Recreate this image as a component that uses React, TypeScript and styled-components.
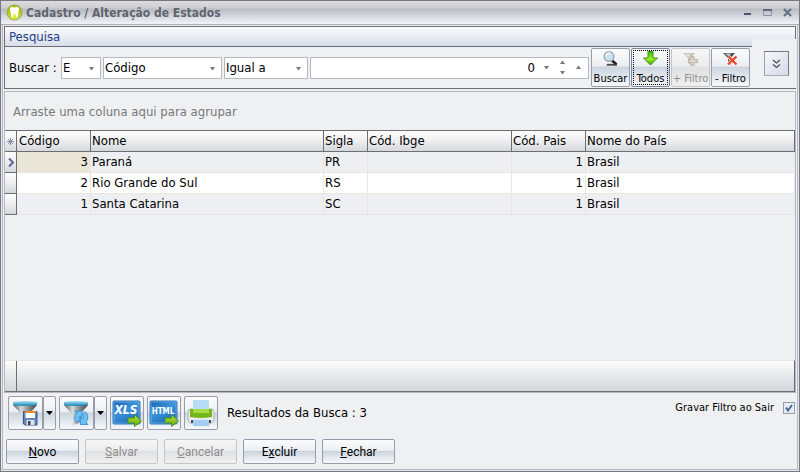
import React from "react";
import styled, { createGlobalStyle, css } from "styled-components";

const dark = "#6c6e75";
const line = "#b4b8c3";
const surface = "#eff0f2";
const cellLine = "#e8e6df";
const uiFont = '"DejaVu Sans Condensed", Tahoma, sans-serif';

const GlobalStyle = createGlobalStyle`
  *, *::before, *::after { box-sizing: border-box; }
  body { margin: 0; background: ${surface}; }
  button, input, select { font: inherit; color: inherit; margin: 0; }
`;

const Window = styled.div`
  min-height: 100vh;
  display: flex;
  flex-direction: column;
  border: 1px solid #777982;
  background: #e6e7ea;
  font: 13px/16px ${uiFont};
  color: #000;
`;

const TitleBar = styled.header`
  height: 24px;
  flex: none;
  display: flex;
  align-items: center;
  padding: 0 2px 0 5px;
  border-bottom: 1px solid #acaebb;
  background: linear-gradient(#dcdcde 0, #cfcfd2 7px, #b9bcc3 8px, #cfd2d9 14px, #eef0f5 22px);
`;

const Title = styled.h1`
  flex: 1;
  margin: 0;
  padding-left: 3px;
  font: bold 12px/16px ${uiFont};
  color: #5f646d;
`;

const WindowButton = styled.button`
  width: 20px;
  height: 20px;
  padding: 0;
  border: 0;
  background: none;
  display: flex;
  align-items: center;
  justify-content: center;
`;

const Client = styled.main`
  flex: 1;
  display: flex;
  flex-direction: column;
  margin: 0 1px 1px;
  padding: 1px;
  border: solid ${line};
  border-width: 0 1px 1px;
  background: ${surface};
`;

const SearchPanel = styled.section`
  position: relative;
  margin-bottom: 2px;
  border: 1px solid ${dark};
`;

const PanelTitle = styled.h2`
  height: 20px;
  margin: 0;
  padding: 2px 4px;
  font: 13px/16px ${uiFont};
  color: #1f3f86;
  border-bottom: 1px solid ${dark};
  background: linear-gradient(#fbfcfd, #d7dee9);
`;

const SearchRow = styled.div`
  display: flex;
  align-items: center;
  gap: 2px;
  height: 41px;
  padding: 0 45px 0 4px;
`;

const SearchLabel = styled.label`
  width: 50px;
  flex: none;
  white-space: nowrap;
`;

const Field = styled.div<{ $width?: number }>`
  height: 22px;
  display: flex;
  align-items: center;
  position: relative;
  border: 1px solid ${line};
  background: #fff;
  ${(p) => (p.$width ? css`width: ${p.$width}px; flex: none;` : css`flex: 1; min-width: 60px;`)}
`;

const Select = styled.select`
  width: 100%;
  height: 20px;
  padding: 0 18px 0 1px;
  border: 0;
  outline: 0;
  appearance: none;
  background: none;
`;

const DropMark = styled.svg`
  position: absolute;
  right: 6px;
  top: 9px;
  pointer-events: none;
`;

const NumberInput = styled.input`
  flex: 1;
  min-width: 0;
  height: 20px;
  padding: 0 3px;
  border: 0;
  outline: 0;
  background: none;
  text-align: right;
`;

const SpinButton = styled.button`
  width: 16px;
  height: 20px;
  padding: 0;
  border: 0;
  background: none;
  display: flex;
  align-items: center;
  justify-content: center;
`;

const SpinGroup = styled.div`
  display: flex;
  padding-right: 2px;
`;

const ActionBar = styled.div`
  display: flex;
  gap: 1px;
`;

const glossy = css`
  border: 1px solid #979caa;
  border-radius: 2px;
  background: linear-gradient(#fbfcfd 0%, #eceff3 45%, #ccd5df 50%, #dde3ea 70%, #f7f9fb 100%);
  color: #000;
  &:disabled {
    border-color: #c4c5c7;
    color: #8c8d8f;
    background: linear-gradient(#f6f6f7 0%, #ededee 45%, #dfe0e1 50%, #f0f0f1 100%);
  }
`;

const ActionButton = styled.button<{ $focused?: boolean }>`
  ${glossy}
  width: 39px;
  height: 39px;
  padding: 2px 0 0;
  display: flex;
  flex-direction: column;
  align-items: center;
  gap: 4px;
  font-size: 11px;
  line-height: 14px;
  white-space: nowrap;
  ${(p) => p.$focused && css`outline: 1px dotted #000; outline-offset: -3px; border-color: #7c84a0;`}
`;

const ExpandArea = styled.div`
  position: absolute;
  top: 12px;
  right: -1px;
  width: 44px;
  height: 49px;
  padding: 12px;
  background: ${surface};
`;

const ExpandButton = styled.button`
  width: 25px;
  height: 25px;
  padding: 0;
  display: flex;
  align-items: center;
  justify-content: center;
  border: 1px solid #74798a;
  border-left-color: #9a9fad;
  border-bottom-color: #a8adba;
  background: linear-gradient(135deg, #f6f7fa, #d5dae6);
`;

const GridPanel = styled.section`
  flex: 1;
  display: flex;
  flex-direction: column;
  border: 1px solid ${line};
`;

const GroupHint = styled.div`
  height: 38px;
  padding: 12px 8px;
  line-height: 16px;
  color: #77787b;
`;

const Table = styled.table`
  width: 100%;
  table-layout: fixed;
  border-collapse: separate;
  border-spacing: 0;
`;

const metal = "linear-gradient(#fdfdfd, #f0f0f2 45%, #d5d7db)";

const HeadCell = styled.th<{ $mark?: boolean }>`
  height: 22px;
  padding: 0 1px;
  border: solid ${dark};
  border-width: 1px 1px 1px 0;
  background: ${metal};
  font-weight: 400;
  text-align: left;
  white-space: nowrap;
  &:nth-child(2) { padding-left: 2px; }
`;

const Marker = styled.td`
  padding: 0 1px;
  border: solid ${dark};
  border-width: 0 1px 1px 0;
  background: ${metal};
`;

const Cell = styled.td<{ $right?: boolean; $active?: boolean }>`
  height: 21px;
  padding: 0 2px 0 1px;
  border: solid ${cellLine};
  border-width: 0 1px 1px 0;
  text-align: ${(p) => (p.$right ? "right" : "left")};
  white-space: nowrap;
  ${(p) => p.$active && css`background: #eae7d8;`}
`;

const Row = styled.tr<{ $alt: boolean }>`
  background: ${(p) => (p.$alt ? "#fff" : "#eeeff3")};
`;

const CenteredMark = styled.svg`
  display: block;
  margin: 0 auto;
`;

const GridFooter = styled.div`
  height: 32px;
  margin-top: auto;
  display: flex;
  border: solid ${dark};
  border-width: 0 1px 1px 0;
  border-top: 1px solid ${cellLine};
  background: linear-gradient(#fdfdfd, #eff0f1 30%, #d3d5da);
`;

const FooterMark = styled.div`
  width: 12px;
  border-right: 1px solid ${dark};
`;

const ToolRow = styled.div`
  display: flex;
  align-items: center;
  gap: 3px;
  padding: 3px 1px 0 4px;
`;

const Split = styled.div`
  display: flex;
`;

const ToolButton = styled.button<{ $narrow?: boolean }>`
  ${glossy}
  width: ${(p) => (p.$narrow ? 13 : 34)}px;
  height: 34px;
  padding: 0;
  display: flex;
  align-items: center;
  justify-content: center;
`;

const SplitMain = styled(ToolButton)`
  width: 35px;
`;

const ResultText = styled.output`
  flex: 1;
  padding: 0 6px;
`;

const SaveFilter = styled.label`
  display: flex;
  align-items: center;
  gap: 9px;
  font-size: 11px;
  line-height: 14px;
  padding-bottom: 10px;
`;

const CheckHolder = styled.span`
  position: relative;
  display: block;
  width: 12px;
  height: 12px;
`;

const CheckBox = styled.input`
  appearance: none;
  display: block;
  width: 12px;
  height: 12px;
  border: 1px solid #9a9ca3;
  background: #e7edf3;
  & + svg { display: none; }
  &:checked + svg { display: block; }
`;

const CheckMark = styled.svg`
  position: absolute;
  inset: 0;
  pointer-events: none;
`;

const CommandRow = styled.div`
  display: flex;
  gap: 6px;
  padding: 9px 2px 4px;
`;

const Command = styled.button`
  ${glossy}
  width: 73px;
  height: 25px;
  padding: 0;
  font: 12px/16px Roboto, "Liberation Sans", sans-serif;
`;

const Triangle = ({ up = false }: { up?: boolean }) => (
  <svg width="5" height="3" viewBox="0 0 5 3" aria-hidden="true">
    <path d={up ? "M0 3h5L3 0H2z" : "M0 0h5L3 3H2z"} fill="#77797c" />
  </svg>
);

const ToothIcon = () => (
  <svg width="17" height="17" viewBox="0 0 17 17" aria-hidden="true">
    <defs>
      <radialGradient id="tooth" cx="50%" cy="75%" r="60%">
        <stop offset="0" stopColor="#e6f04a" />
        <stop offset="1" stopColor="#a3bd10" />
      </radialGradient>
    </defs>
    <circle cx="8.500" cy="8.500" r="7.600" fill="url(#tooth)" stroke="#94a63c" strokeWidth=".8" />
    <path d="M4.300 3.800C5.300 2.200 7.200 3.300 8.500 3.400 10 3.300 11.700 2.200 12.700 3.800c.9 1.600-.2 3.400-.5 5-.2 1.900-.3 5-1.500 5-1.100 0-.8-4.200-2.200-4.200s-1.100 4.200-2.200 4.200c-1.200 0-1.300-3.100-1.500-5-.3-1.600-1.400-3.400-.5-5z" fill="#fff" />
  </svg>
);

const SearchIcon = () => (
  <svg width="17" height="17" viewBox="0 0 17 17" aria-hidden="true">
    <path d="M3 15h13l-4-2.500H6z" fill="#b9bcc0" />
    <path d="M9.500 9l5 4.500" stroke="#1f2022" strokeWidth="2.600" />
    <path d="M5 13.800h10" stroke="#3c3d40" strokeWidth="1.400" />
    <circle cx="7" cy="5.500" r="4.800" fill="#c9e2ef" stroke="#a3abb0" strokeWidth="1.400" />
    <path d="M4 5a3 3 0 0 1 4-2.500" stroke="#fff" strokeWidth="1.500" fill="none" />
  </svg>
);

const DownIcon = () => (
  <svg width="17" height="17" viewBox="0 0 17 17" aria-hidden="true">
    <defs>
      <linearGradient id="down" x2="0" y2="1">
        <stop offset="0" stopColor="#36b80e" />
        <stop offset=".55" stopColor="#a5ee20" />
        <stop offset="1" stopColor="#2aa509" />
      </linearGradient>
    </defs>
    <path d="M6 .5h5V7h4.500l-7 7-7-7H6z" fill="url(#down)" stroke="#329516" />
  </svg>
);

const PlusFilterIcon = () => (
  <svg width="17" height="17" viewBox="0 0 17 17" aria-hidden="true">
    <path d="M1 2h12L9 7v7l-3-2V7z" fill="#c8c4b7" />
    <path d="M3 3h5L7 6z" fill="#e9e6dc" />
    <path d="M9 5.500h3v3h3.500v3H12v3H9v-3H6.500v-3H9z" fill="#d8d4c7" stroke="#b9b5a8" />
  </svg>
);

const MinusFilterIcon = () => (
  <svg width="17" height="17" viewBox="0 0 17 17" aria-hidden="true">
    <path d="M1 2h12L9 7v7l-3-2V7z" fill="#4e5257" />
    <path d="M3 2.500h6L7 6z" fill="#b9c0c6" />
    <path d="M6.500 5.500l8 8M14.500 5.500l-8.500 8" stroke="#fff" strokeWidth="3.600" />
    <path d="M6.500 5.500l8 8M14.500 5.500l-8.500 8" stroke="#ee4128" strokeWidth="2.300" />
  </svg>
);

const Funnel = () => (
  <>
    <defs>
      <linearGradient id="cone">
        <stop offset="0" stopColor="#55595c" />
        <stop offset=".35" stopColor="#d7d9da" />
        <stop offset=".65" stopColor="#888c8f" />
        <stop offset="1" stopColor="#3f4346" />
      </linearGradient>
      <linearGradient id="rim" x2="0" y2="1">
        <stop offset="0" stopColor="#a7e4f7" />
        <stop offset="1" stopColor="#1581b2" />
      </linearGradient>
    </defs>
    <path d="M0 4h24l-8.500 10v8L9 24V14z" fill="url(#cone)" />
    <path d="M0 1q12-2 24 0v3q-12 2-24 0z" fill="url(#rim)" />
  </>
);

const FunnelSaveIcon = () => (
  <svg width="25" height="25" viewBox="0 0 25 25" aria-hidden="true">
    <Funnel />
    <path d="M10.500 10.500h13.500v13.500H12l-1.500-1.500z" fill="#5f88bb" stroke="#35598c" />
    <path d="M12.500 11h9.500v6h-9.500z" fill="#fff" />
    <path d="M12 10h11v2H12z" fill="#ee8b2d" />
    <path d="M13.500 19h8v5h-8z" fill="#dfe3e6" />
    <path d="M15 20h2.500v4H15z" fill="#3b4756" />
  </svg>
);

const FunnelRefreshIcon = () => (
  <svg width="25" height="25" viewBox="0 0 25 25" aria-hidden="true">
    <Funnel />
    <path
      d="M12.500 21c-2.800-3-2-7 .5-9l-2-2h7v7l-2-2c-1.500 1.500-1.200 3.500 0 5zM21 10.500c3.500 3 3.500 7.500 1 10.500l2 2.500h-7.500v-7l2 2c1.300-1.700 1.300-3.500-.2-5z"
      fill="#6cc1f4"
      stroke="#2787cb"
      strokeWidth=".8"
    />
  </svg>
);

const ExportIcon = ({ kind }: { kind: "XLS" | "HTML" }) => (
  <svg width="30" height="27" viewBox="0 0 30 27" role="img" aria-label={kind}>
    <defs>
      <linearGradient id="blue" x2=".6" y2="1">
        <stop offset="0" stopColor="#1860ae" />
        <stop offset=".5" stopColor="#3c93da" />
        <stop offset="1" stopColor="#1c6dbb" />
      </linearGradient>
      <linearGradient id="go" x2="0" y2="1">
        <stop offset="0" stopColor="#b9e63f" />
        <stop offset="1" stopColor="#63a90c" />
      </linearGradient>
    </defs>
    <rect x="1" y="1" width="27" height="23" rx="1" fill="url(#blue)" stroke="#2e78bf" />
    <rect x="2" y="2" width="25" height="21" fill="none" stroke="#84bdec" strokeWidth=".6" />
    <text
      x="14"
      y="14"
      textAnchor="middle"
      fill="#fff"
      fontFamily='"DejaVu Sans Condensed", sans-serif'
      fontWeight="bold"
      fontStyle={kind === "XLS" ? "italic" : "normal"}
      fontSize={kind === "XLS" ? 12 : 8}
    >
      {kind}
    </text>
    <path d="M16 18h6.500v-3.500L29.500 21l-7 5.500V23H16z" fill="url(#go)" stroke="#4e8f10" strokeWidth=".9" />
  </svg>
);

const PrinterIcon = () => (
  <svg width="28" height="28" viewBox="0 0 28 28" aria-hidden="true">
    <path d="M1 13q0-3 3-3h20q3 0 3 3v9l-2 2H3l-2-2z" fill="#e8e9e7" stroke="#b3b4b2" />
    <path d="M6 1h16v10H6z" fill="#b9dcf9" />
    <path d="M3 10h22v8q-11 2-22 0z" fill="#75b61d" />
    <path d="M6 10h16v4H6z" fill="#a5db47" />
    <path d="M4 19q10 1.500 20 0v2H4z" fill="#fdfdfd" />
    <path d="M4 21h20v3H4z" fill="#44474a" />
    <path d="M6 20.500h16V27H6z" fill="#a5cdf2" />
  </svg>
);

const rows = [
  { code: 3, name: "Paraná", abbr: "PR", ibge: "", countryCode: 1, country: "Brasil" },
  { code: 2, name: "Rio Grande do Sul", abbr: "RS", ibge: "", countryCode: 1, country: "Brasil" },
  { code: 1, name: "Santa Catarina", abbr: "SC", ibge: "", countryCode: 1, country: "Brasil" },
];

function Combo({ label, value, width }: { label: string; value: string; width: number }) {
  return (
    <Field $width={width}>
      <Select aria-label={label} defaultValue={value}>
        <option>{value}</option>
      </Select>
      <DropMark width="5" height="3" viewBox="0 0 5 3" aria-hidden="true">
        <path d="M0 0h5L3 3H2z" fill="#77797c" />
      </DropMark>
    </Field>
  );
}

export default function App() {
  return (
    <>
      <GlobalStyle />
      <Window>
        <TitleBar>
          <ToothIcon />
          <Title>Cadastro / Alteração de Estados</Title>
          <WindowButton aria-label="Minimizar">
            <svg width="9" height="9" viewBox="0 0 9 9"><path d="M1 5h7v2H1z" fill="#4c566b" /></svg>
          </WindowButton>
          <WindowButton aria-label="Maximizar">
            <svg width="9" height="9" viewBox="0 0 9 9">
              <path d="M.5 1.500h8v6h-8z" fill="none" stroke="#8692a4" />
              <path d="M0 1h9v2H0z" fill="#5b677b" />
            </svg>
          </WindowButton>
          <WindowButton aria-label="Fechar janela">
            <svg width="9" height="9" viewBox="0 0 9 9"><path d="M1 1l7 7M8 1L1 8" stroke="#66728a" strokeWidth="2.200" /></svg>
          </WindowButton>
        </TitleBar>
        <Client>
          <SearchPanel>
            <PanelTitle>Pesquisa</PanelTitle>
            <SearchRow>
              <SearchLabel htmlFor="value">Buscar :</SearchLabel>
              <Combo label="Operador" value="E" width={40} />
              <Combo label="Campo" value="Código" width={119} />
              <Combo label="Comparação" value="Igual a" width={84} />
              <Field>
                <NumberInput id="value" defaultValue="0" />
                <SpinGroup>
                  <SpinButton aria-label="Calculadora"><Triangle /></SpinButton>
                  <SpinButton aria-label="Ajustar">
                    <svg width="5" height="13" viewBox="0 0 5 13"><path d="M0 3h5L3 0H2zM0 10h5L3 13H2z" fill="#77797c" /></svg>
                  </SpinButton>
                  <SpinButton aria-label="Recolher"><Triangle up /></SpinButton>
                </SpinGroup>
              </Field>
              <ActionBar>
                <ActionButton><SearchIcon />Buscar</ActionButton>
                <ActionButton $focused><DownIcon />Todos</ActionButton>
                <ActionButton disabled><PlusFilterIcon />+ Filtro</ActionButton>
                <ActionButton><MinusFilterIcon />- Filtro</ActionButton>
              </ActionBar>
            </SearchRow>
            <ExpandArea>
              <ExpandButton aria-label="Expandir">
                <svg width="9" height="10" viewBox="0 0 9 10"><path d="M1 1l3.500 3L8 1M1 5.500l3.500 3 3.500-3" fill="none" stroke="#4c4f57" strokeWidth="1.300" /></svg>
              </ExpandButton>
            </ExpandArea>
          </SearchPanel>
          <GridPanel>
            <GroupHint>Arraste uma coluna aqui para agrupar</GroupHint>
            <Table>
              <colgroup>
                <col width="12" />
                <col width="74" />
                <col width="233" />
                <col width="44" />
                <col width="144" />
                <col width="74" />
                <col />
              </colgroup>
              <thead>
                <tr>
                  <HeadCell aria-label="Indicador">
                    <CenteredMark width="7" height="7" viewBox="0 0 7 7">
                      <path d="M3.500 0v7M0 3.500h7M1 1l5 5M6 1L1 6" stroke="#8585ad" strokeWidth=".9" />
                    </CenteredMark>
                  </HeadCell>
                  {["Código", "Nome", "Sigla", "Cód. Ibge", "Cód. Pais", "Nome do País"].map((h) => (
                    <HeadCell key={h} scope="col">{h}</HeadCell>
                  ))}
                </tr>
              </thead>
              <tbody>
                {rows.map((r, i) => (
                  <Row key={r.code} $alt={i % 2 === 1}>
                    <Marker>
                      {i === 0 && (
                        <CenteredMark width="6" height="9" viewBox="0 0 6 9">
                          <path d="M1 .5l4 4-4 4" fill="none" stroke="#66618f" strokeWidth="2" />
                        </CenteredMark>
                      )}
                    </Marker>
                    <Cell $right $active={i === 0}>{r.code}</Cell>
                    <Cell>{r.name}</Cell>
                    <Cell>{r.abbr}</Cell>
                    <Cell>{r.ibge}</Cell>
                    <Cell $right>{r.countryCode}</Cell>
                    <Cell>{r.country}</Cell>
                  </Row>
                ))}
              </tbody>
            </Table>
            <GridFooter><FooterMark /></GridFooter>
          </GridPanel>
          <ToolRow>
            <Split>
              <SplitMain aria-label="Salvar filtro"><FunnelSaveIcon /></SplitMain>
              <ToolButton $narrow aria-label="Opções de salvar filtro">
                <svg width="7" height="4" viewBox="0 0 7 4"><path d="M0 0h7L3.500 4z" /></svg>
              </ToolButton>
            </Split>
            <Split>
              <SplitMain aria-label="Recarregar filtro"><FunnelRefreshIcon /></SplitMain>
              <ToolButton $narrow aria-label="Opções de recarregar filtro">
                <svg width="7" height="4" viewBox="0 0 7 4"><path d="M0 0h7L3.500 4z" /></svg>
              </ToolButton>
            </Split>
            <ToolButton><ExportIcon kind="XLS" /></ToolButton>
            <ToolButton><ExportIcon kind="HTML" /></ToolButton>
            <ToolButton aria-label="Imprimir"><PrinterIcon /></ToolButton>
            <ResultText>Resultados da Busca : 3</ResultText>
            <SaveFilter>
              Gravar Filtro ao Sair
              <CheckHolder>
                <CheckBox type="checkbox" defaultChecked />
                <CheckMark width="12" height="12" viewBox="0 0 12 12">
                  <path d="M3 5.500l2 3L9 3" fill="none" stroke="#45699c" strokeWidth="2" />
                </CheckMark>
              </CheckHolder>
            </SaveFilter>
          </ToolRow>
          <CommandRow>
            <Command><u>N</u>ovo</Command>
            <Command disabled><u>S</u>alvar</Command>
            <Command disabled><u>C</u>ancelar</Command>
            <Command>E<u>x</u>cluir</Command>
            <Command><u>F</u>echar</Command>
          </CommandRow>
        </Client>
      </Window>
    </>
  );
}
